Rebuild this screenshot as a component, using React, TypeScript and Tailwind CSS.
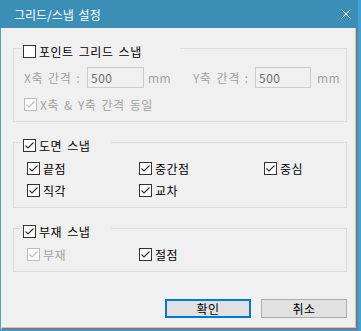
import type { ReactNode } from "react"

function Check({ checked = true, disabled = false }: { checked?: boolean; disabled?: boolean }) {
  const color = disabled ? "#bcbcbc" : "#333333"
  return (
    <span
      className={`flex h-[13px] w-[13px] shrink-0 items-center justify-center border bg-white ${
        disabled ? "border-[#bcbcbc]" : "border-[#333333]"
      }`}
    >
      {checked && (
        <svg width="11" height="11" viewBox="0 0 11 11" fill="none">
          <path d="M1.5 5.5L4 8L9.5 2.5" stroke={color} strokeWidth="1.2" />
        </svg>
      )}
    </span>
  )
}

function Option({
  label,
  checked = true,
  disabled = false,
}: {
  label: string
  checked?: boolean
  disabled?: boolean
}) {
  return (
    <label className="flex h-[13px] items-center gap-[3px]">
      <Check checked={checked} disabled={disabled} />
      <span className={disabled ? "text-[#a0a0a0]" : "text-black"}>{label}</span>
    </label>
  )
}

function Group({
  title,
  checked = true,
  legendClass,
  className,
  children,
}: {
  title: string
  checked?: boolean
  legendClass: string
  className: string
  children: ReactNode
}) {
  return (
    <div className={`ml-[11px] w-[334px] border border-[#dcdcdc] pb-[10px] ${className}`}>
      <div className="-mt-[4px] ml-[8px] flex">
        <div className={`flex h-[13px] bg-[#f0f0f0] pl-px ${legendClass}`}>
          <Option label={title} checked={checked} />
        </div>
      </div>
      {children}
    </div>
  )
}

function SpacingInput({ label, value, labelClass, inputClass }: { label: string; value: string; labelClass: string; inputClass: string }) {
  return (
    <>
      <span className={`text-[#a0a0a0] ${labelClass}`}>{label}</span>
      <div className={`flex h-[21px] items-center border border-[#cccccc] pl-[3px] text-[#6d6d6d] ${inputClass}`}>
        {value}
      </div>
    </>
  )
}

export default function App() {
  return (
    <div
      className="flex h-[331px] w-[361px] flex-col bg-[#3da3dc] text-[12px] leading-[13px] tracking-[0.5px] [word-spacing:2px]"
      style={{ fontFamily: '"Noto Sans CJK KR", "Noto Sans", sans-serif' }}
    >
      {/* title bar */}
      <div className="mr-[3px] flex h-[28px] shrink-0 items-center justify-between bg-[#3b8fb7] pl-[14px] pr-[7px] text-white">
        <span className="tracking-normal">그리드/스냅 설정</span>
        <svg width="10" height="10" viewBox="0 0 10 10" fill="none">
          <path d="M0.5 0.5L9.5 9.5M9.5 0.5L0.5 9.5" stroke="#ffffff" strokeWidth="1" />
        </svg>
      </div>

      {/* body */}
      <div className="mb-px ml-px mr-[3px] flex flex-1 flex-col border-b-2 border-l border-r-2 border-b-[#7a7a7a] border-l-[#fafafa] border-r-[#7a7a7a] bg-[#f0f0f0] shadow-[inset_-1px_-1px_0_#c4c4c4]">
        <Group title="포인트 그리드 스냅" checked={false} legendClass="w-[158px]" className="mt-[20px]">
          <div className="mt-[9px] flex h-[21px] items-center pl-[10px]">
            <SpacingInput label="X축 간격 :" value="500" labelClass="w-[63px]" inputClass="w-[57px]" />
            <span className="ml-[4px] w-[45px] text-[#a0a0a0]">mm</span>
            <SpacingInput label="Y축 간격 :" value="500" labelClass="w-[62px]" inputClass="w-[56px]" />
            <span className="ml-[6px] text-[#a0a0a0]">mm</span>
          </div>
          <div className="mt-[10px] pl-[10px]">
            <Option label="X축 & Y축 간격 동일" disabled />
          </div>
        </Group>

        <Group title="도면 스냅" legendClass="w-[89px]" className="mt-[20px]">
          <div className="mt-[10px] grid grid-cols-[112px_125px_auto] gap-y-[9px] pl-[13px]">
            <Option label="끝점" />
            <Option label="중간점" />
            <Option label="중심" />
            <Option label="직각" />
            <Option label="교차" />
          </div>
        </Group>

        <Group title="부재 스냅" legendClass="w-[89px]" className="mt-[20px]">
          <div className="mt-[10px] grid grid-cols-[112px_auto] pl-[13px]">
            <Option label="부재" disabled />
            <Option label="절점" />
          </div>
        </Group>

        <div className="mt-[27px] flex justify-end gap-[10px] pr-[9px]">
          <button className="flex h-[19px] w-[86px] items-center justify-center border-2 border-[#0078d7] bg-[#e1e1e1] text-black">
            확인
          </button>
          <button className="flex h-[19px] w-[86px] items-center justify-center border border-[#adadad] bg-[#e1e1e1] text-black">
            취소
          </button>
        </div>
      </div>
    </div>
  )
}
